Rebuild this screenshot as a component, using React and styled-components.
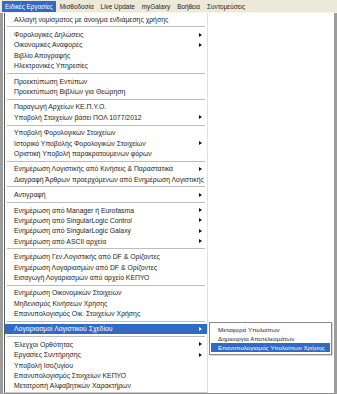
import React from "react";
import styled, { createGlobalStyle } from "styled-components";

const GlobalStyle = createGlobalStyle`
  html, body {
    margin: 0;
    padding: 0;
    background: #fff;
  }
  body {
    font-family: "Liberation Sans", Arial, sans-serif;
  }
`;

const Screen = styled.div`
  width: 337px;
  height: 394px;
  display: flex;
  flex-direction: column;
  overflow: hidden;
  background: #fff;
`;

const MenuBar = styled.div`
  height: 13px;
  flex: none;
  background: #ece9d8;
  display: flex;
  align-items: stretch;
  padding: 1px 0 0 2px;
  box-sizing: border-box;
  gap: 1px;
  border-bottom: 1px solid #f6f4ec;
`;

const BarItem = styled.div`
  display: flex;
  align-items: center;
  padding: 0 3px;
  font-size: 6.4px;
  color: ${p => (p.open ? "#fff" : "#1a1a1a")};
  background: ${p => (p.open ? "#316ac5" : "transparent")};
  white-space: nowrap;
`;

const Frame = styled.div`
  flex: 1;
  display: flex;
  align-items: flex-start;
  border-left: 3px solid #9d9d9d;
  border-right: 3px solid #9d9d9d;
  border-bottom: 6px solid #8c8c8c;
  padding-left: 1px;
`;

const Dropdown = styled.div`
  width: 204px;
  box-sizing: border-box;
  border-left: 1px solid #5a5a5a;
  border-right: 1px solid #e2e2e2;
  border-bottom: 1px solid #c8c8c8;
  padding: 1px 0 1px;
  background: #fff;
`;

const Item = styled.div`
  position: relative;
  height: 10.4px;
  display: flex;
  align-items: center;
  justify-content: space-between;
  padding: 0 5px 0 9px;
  font-size: 6.85px;
  white-space: nowrap;
  color: ${p => (p.active ? "#fff" : "#1e1e1e")};
  background: ${p => (p.active ? "#316ac5" : "transparent")};
`;

const Arrow = styled.span`
  width: 0;
  height: 0;
  border-top: 2.5px solid transparent;
  border-bottom: 2.5px solid transparent;
  border-left: 3px solid ${p => (p.light ? "#fff" : "#111")};
`;

const Separator = styled.div`
  height: 1px;
  margin: 2px 2px;
  background: #bcbcbc;
`;

const Submenu = styled.div`
  position: absolute;
  left: calc(100% + 2px);
  top: -2px;
  width: 123px;
  box-sizing: border-box;
  border: 1px solid #8a8a8a;
  padding: 2px 1px;
  background: #fff;
  box-shadow: 1px 1px 0 #d6d6d6;
`;

const SubItem = styled.div`
  height: 9px;
  display: flex;
  align-items: center;
  padding-left: 7px;
  font-size: 6.2px;
  white-space: nowrap;
  color: ${p => (p.active ? "#fff" : "#1e1e1e")};
  background: ${p => (p.active ? "#316ac5" : "transparent")};
`;

const barItems = ["Ειδικές Εργασίες", "Μισθοδοσία", "Live Update", "myGalaxy", "Βοήθεια", "Συντομεύσεις"];

const menu = [
  ["Αλλαγή νομίσματος με άνοιγμα ενδιάμεσης χρήσης"],
  "-",
  ["Φορολογικές Δηλώσεις", true],
  ["Οικονομικές Αναφορές", true],
  ["Βιβλίο Απογραφής"],
  ["Ηλεκτρονικές Υπηρεσίες"],
  "-",
  ["Προεκτύπωση Εντύπων"],
  ["Προεκτύπωση Βιβλίων για Θεώρηση"],
  "-",
  ["Παραγωγή Αρχείων ΚΕ.Π.Υ.Ο."],
  ["Υποβολή Στοιχείων βάσει ΠΟΛ 1077/2012", true],
  "-",
  ["Υποβολή Φορολογικών Στοιχείων"],
  ["Ιστορικό Υποβολής Φορολογικών Στοιχείων", true],
  ["Οριστική Υποβολή παρακρατούμενων φόρων"],
  "-",
  ["Ενημέρωση Λογιστικής από Κινήσεις & Παραστατικά", true],
  ["Διαγραφή Άρθρων προερχόμενων από Ενημέρωση Λογιστικής"],
  "-",
  ["Αντιγραφή", true],
  "-",
  ["Ενημέρωση από Manager ή Eurofasma", true],
  ["Ενημέρωση από SingularLogic Control", true],
  ["Ενημέρωση από SingularLogic Galaxy", true],
  ["Ενημέρωση από ASCII αρχεία", true],
  "-",
  ["Ενημέρωση Γεν.Λογιστικής από DF & Ορίζοντες"],
  ["Ενημέρωση Λογαριασμών από DF & Ορίζοντες"],
  ["Εισαγωγή Λογαριασμών από αρχείο ΚΕΠΥΟ"],
  "-",
  ["Ενημέρωση Οικονομικών Στοιχείων"],
  ["Μηδενισμός Κινήσεων Χρήσης"],
  ["Επανυπολογισμός Οικ. Στοιχείων Χρήσης"],
  "-",
  ["Λογαριασμοί Λογιστικού Σχεδίου", true, true],
  "-",
  ["Έλεγχοι Ορθότητας", true],
  ["Εργασίες Συντήρησης", true],
  ["Υποβολή Ισοζυγίου"],
  ["Επανυπολογισμός Στοιχείων ΚΕΠΥΟ"],
  ["Μετατροπή Αλφαβητικών Χαρακτήρων"]
];

const subItems = ["Μεταφορά Υπολοίπων", "Δημιουργία Αποτελεσμάτων", "Επανυπολογισμός Υπολοίπων Χρήσης"];

export default function App() {
  return (
    <Screen>
      <GlobalStyle />
      <MenuBar>
        {barItems.map((label, idx) => (
          <BarItem key={label} open={idx === 0}>
            {label}
          </BarItem>
        ))}
      </MenuBar>
      <Frame>
        <Dropdown>
          {menu.map((entry, idx) => {
            if (entry === "-") return <Separator key={idx} />;
            const [label, hasArrow, active] = entry;
            return (
              <Item key={idx} active={active}>
                <span>{label}</span>
                {hasArrow && <Arrow light={active} />}
                {active && (
                  <Submenu>
                    {subItems.map((sub, i) => (
                      <SubItem key={sub} active={i === 2}>
                        {sub}
                      </SubItem>
                    ))}
                  </Submenu>
                )}
              </Item>
            );
          })}
        </Dropdown>
      </Frame>
    </Screen>
  );
}
